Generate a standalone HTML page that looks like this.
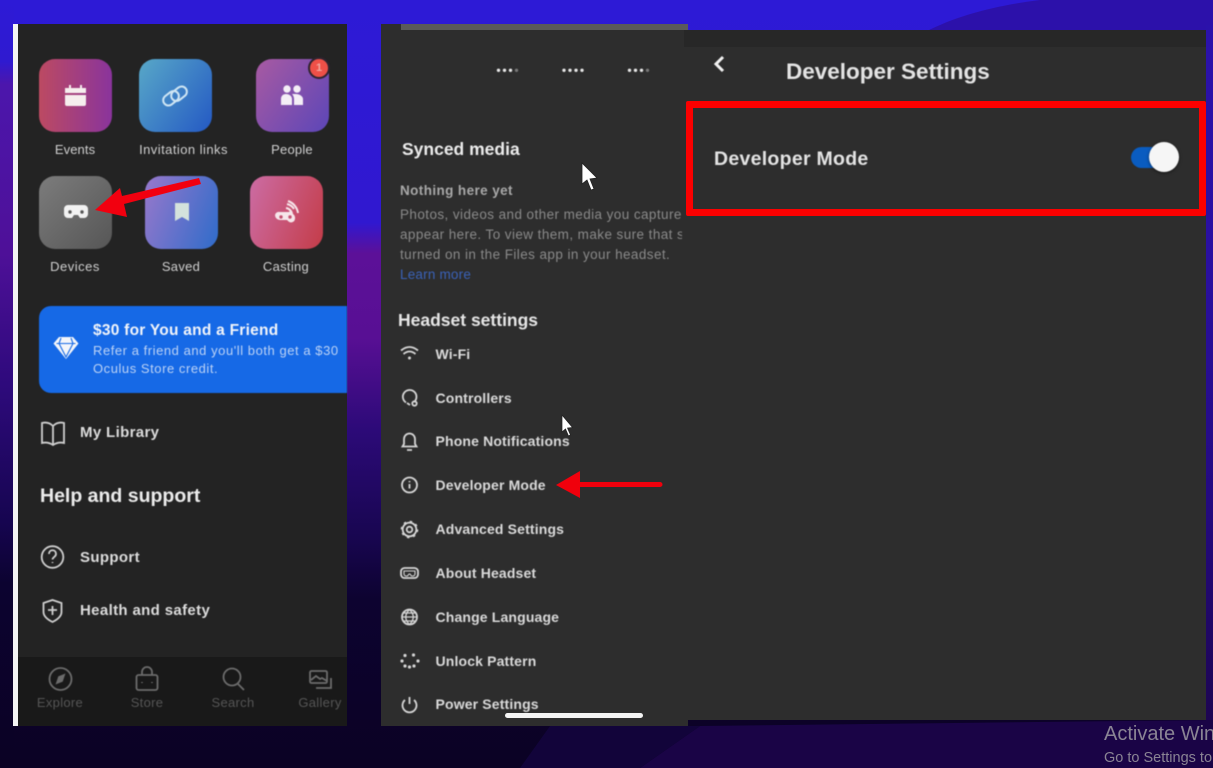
<!DOCTYPE html>
<html><head><meta charset="utf-8"><style>
html,body{margin:0;padding:0;background:#0c0226}
#r{position:relative;width:1213px;height:768px;overflow:hidden;font-family:"Liberation Sans",sans-serif;-webkit-font-smoothing:antialiased}
.a{position:absolute;white-space:nowrap}
svg.a{overflow:visible}
.p{position:absolute}
.t{position:absolute;white-space:nowrap;color:#d0d0d0;font-size:13px;transform:translateX(-50%);line-height:16px;letter-spacing:.3px}
.i{position:absolute;width:73px;height:73px;border-radius:16px}
.m{position:absolute;white-space:nowrap;font-weight:700;font-size:14px;color:#dadada;line-height:16px;left:435.500px;letter-spacing:.15px}
.l{position:absolute;white-space:nowrap;left:80px;color:#dcdcdc;font-weight:700;font-size:15px;line-height:18px;letter-spacing:.35px}
.n{color:#565656}
.b{filter:blur(.5px)}
</style></head><body><div id="r">
<svg class="a" style="left:0;top:0" width="1213" height="768" viewBox="0 0 1213 768">
<defs>
<linearGradient id="bg" x1="0" y1="0" x2="0" y2="768" gradientUnits="userSpaceOnUse"><stop offset="0" stop-color="#2d1ad6"/><stop offset=".29" stop-color="#3018d0"/><stop offset=".33" stop-color="#5c1098"/><stop offset=".44" stop-color="#580f94"/><stop offset=".56" stop-color="#2c0a78"/><stop offset=".7" stop-color="#180650"/><stop offset=".78" stop-color="#0d0330"/><stop offset="1" stop-color="#0b0224"/></linearGradient>
<linearGradient id="ls" x1="0" y1="0" x2="0" y2="768" gradientUnits="userSpaceOnUse"><stop offset="0" stop-color="#2d1ad6"/><stop offset=".08" stop-color="#2f1ad0"/><stop offset=".11" stop-color="#4c16ac"/><stop offset=".33" stop-color="#4e1098"/><stop offset=".5" stop-color="#2e0a7c"/><stop offset=".68" stop-color="#160550"/><stop offset=".76" stop-color="#0c0330"/><stop offset="1" stop-color="#0b0224"/></linearGradient>
<linearGradient id="rs" x1="0" y1="0" x2="0" y2="768" gradientUnits="userSpaceOnUse"><stop offset="0" stop-color="#2b12ac"/><stop offset=".35" stop-color="#2a10a0"/><stop offset=".65" stop-color="#240a80"/><stop offset="1" stop-color="#1c0448"/></linearGradient>
</defs>
<rect width="1213" height="768" fill="url(#bg)"/>
<rect x="0" y="0" width="14" height="768" fill="url(#ls)"/>
<path d="M925 32 C960 14 1000 5 1040 0 L1213 0 L1213 32Z" fill="#2c11aa"/>
<rect x="1206" y="25" width="7" height="745" fill="url(#rs)"/>
<path d="M640 768 L700 726 L1213 720 L1213 768Z" fill="#1a0446"/>
<path d="M550 726 L700 726 L640 768 L520 768Z" fill="#12043a"/>
</svg>

<!-- PHONE 1 -->
<div class="p" style="left:13px;top:24px;width:334px;height:702px;background:#232323"></div>
<div class="p" style="left:13px;top:24px;width:5px;height:702px;background:#f4f4f4"></div>
<div class="p" style="left:18px;top:657px;width:329px;height:69px;background:#191919"></div>
<div class="b">
<div class="i" style="left:39px;top:59px;background:linear-gradient(90deg,#bc4a62,#8a349c)"></div>
<div class="i" style="left:139px;top:59px;background:linear-gradient(125deg,#58a8c8,#2459c4)"></div>
<div class="i" style="left:256px;top:59px;background:linear-gradient(125deg,#a85aa2,#5c46b8)"></div>
<div class="i" style="left:39px;top:176px;background:linear-gradient(135deg,#7c7c7c,#565656)"></div>
<div class="i" style="left:145px;top:176px;background:linear-gradient(110deg,#9878cc,#2f6cca)"></div>
<div class="i" style="left:250px;top:176px;background:linear-gradient(110deg,#cc6ca4,#c43c48)"></div>
<div class="p" style="left:308px;top:57px;width:22px;height:22px;border-radius:50%;background:#ee5048;border:2px solid #2e2430;box-sizing:border-box"></div>
<div class="a" style="left:309px;top:61px;width:20px;text-align:center;color:#f2a8a0;font-size:11px;line-height:14px;font-weight:700">1</div>

<svg class="a" style="left:0;top:0" width="360" height="290" viewBox="0 0 360 290">
<path d="M65 88h21v5H65zM65 95h21v9a2 2 0 0 1-2 2H67a2 2 0 0 1-2-2z" fill="#f6eeee"/><rect x="69" y="85" width="2" height="4" fill="#f6eeee"/><rect x="80" y="85" width="2" height="4" fill="#f6eeee"/>
<g fill="none" stroke="#cfe6f4" stroke-width="2"><rect x="162.500" y="93" width="17" height="10.500" rx="5.200" transform="rotate(-38 171 98.200)"/><rect x="170.500" y="88.500" width="17" height="10.500" rx="5.200" transform="rotate(-38 179 93.700)"/></g>
<g fill="#f4eef6"><circle cx="287" cy="89" r="3.700"/><circle cx="297" cy="89" r="3.700"/><path d="M281 105v-6c0-3 2-5 5-5s6 2 6 5v6zM294 105v-6c0-2-1-4-2-5 1 0 3 0 4 0 3 0 7 2 7 5v6z"/></g>
<path d="M68 205h16a4 4 0 0 1 4 4v5a4 4 0 0 1-4 4h-4l-2-3h-4l-2 3h-4a4 4 0 0 1-4-4v-5a4 4 0 0 1 4-4z" fill="#f2f2f2"/><circle cx="70" cy="212" r="1.700" fill="#555"/><circle cx="82" cy="212" r="1.700" fill="#555"/>
<path d="M175 203h14v18l-7-4-7 4z" fill="#d4e2dc"/>
<g fill="none" stroke="#f6e6ea" stroke-width="2"><path d="M286 208a7 7 0 0 1 6 6"/><path d="M287 204a11 11 0 0 1 7 5"/><path d="M288 201a15 15 0 0 1 10 12"/></g><path d="M280 212h9a2 2 0 0 1 2-1l2 3a5 5 0 0 1 2 5 4 4 0 0 1-7 2l-1-1h-7a5 5 0 0 1-5-5 4 4 0 0 1 5-3z" fill="#f6e6ea"/><circle cx="281" cy="217" r="1.700" fill="#c45070"/><circle cx="290" cy="217" r="1.700" fill="#c45070"/>
</svg>

<div class="t" style="left:75px;top:142px;letter-spacing:.1px">Events</div>
<div class="t" style="left:183.500px;top:142px;letter-spacing:.45px">Invitation links</div>
<div class="t" style="left:292px;top:142px;letter-spacing:.2px">People</div>
<div class="t" style="left:75px;top:259px;letter-spacing:.5px">Devices</div>
<div class="t" style="left:181px;top:259px;letter-spacing:.3px">Saved</div>
<div class="t" style="left:286px;top:259px;letter-spacing:.3px">Casting</div>

<div class="p" style="left:39px;top:306px;width:308px;height:87px;background:#1669e6;border-radius:12px 0 0 12px"></div>
<svg class="a" style="left:52px;top:335px" width="28" height="28" viewBox="0 0 28 28"><path d="M7 2h14l5.500 6.500L14 24 1.500 8.500z" fill="#f4f6fa"/><path d="M4.500 8.500h19M9 3l-2 5.500L14 22l7-13.500L19 3" fill="none" stroke="#1669e6" stroke-width="1.100"/></svg>
<div class="a" style="left:93px;top:322px;color:#f2f5fa;font-weight:700;font-size:15.500px;line-height:18px;letter-spacing:.25px">$30 for You and a Friend</div>
<div class="a" style="left:93px;top:342px;color:#bcd3f6;font-size:13px;line-height:18px;letter-spacing:.55px">Refer a friend and you'll both get a $30<br>Oculus Store credit.</div>

<svg class="a" style="left:0;top:290px" width="360" height="440" viewBox="0 0 360 440" fill="none" stroke="#cfcfcf" stroke-width="1.800">
<path d="M53 136c-3-3-7-4-11-3v20c4-1 8 0 11 2 3-2 7-3 11-2V133c-4-1-8 0-11 3zM53 136v19"/>
<circle cx="52.500" cy="267" r="10.800"/><path d="M49 264c0-5 7-5 7 0 0 3-3.500 3-3.500 5.500M52.500 272v1"/>
<path d="M52.500 310l9 3v9c0 5-5 8-9 10-4-2-9-5-9-10v-9z"/><path d="M48 320h9M52.500 316v9"/>
<g stroke="#6c6c6c"><circle cx="60.500" cy="389" r="11"/><path d="M57 393l2-6 5-2-2 6z" fill="#6c6c6c"/>
<rect x="136.500" y="385" width="21" height="15" rx="2"/><path d="M142 385v-3a5 5 0 0 1 10 0v3M142 392v1M152 392v1"/>
<circle cx="232" cy="387" r="8.500"/><path d="M238 394l6 6"/>
<rect x="310" y="381" width="17" height="12" rx="1.500"/><path d="M331 388v10h-15M311 390l5-4 4 3 2-1 5 3"/></g>
</svg>
<div class="l" style="top:424px">My Library</div>
<div class="a" style="left:40px;top:484px;color:#ececec;font-weight:700;font-size:19.500px;line-height:24px">Help and support</div>
<div class="l" style="top:549px">Support</div>
<div class="l" style="top:602px">Health and safety</div>
<div class="t n" style="left:60px;top:695px">Explore</div>
<div class="t n" style="left:147px;top:695px">Store</div>
<div class="t n" style="left:233px;top:695px">Search</div>
<div class="t n" style="left:320px;top:695px">Gallery</div>
</div>

<svg class="a" style="left:0;top:0" width="240" height="240" viewBox="0 0 240 240"><path d="M95 210L120 188L122 196L199 178L201 184L124 204L127 217Z" fill="#f2000f"/></svg>

<!-- PHONE 2 -->
<div class="p" style="left:381px;top:24px;width:307px;height:702px;background:#2d2d2d"></div>
<div class="p" style="left:401px;top:24px;width:287px;height:6px;background:#5a5a5a"></div>
<div class="b">
<svg class="a" style="left:381px;top:60px" width="307" height="20" viewBox="0 0 307 20" fill="#e8e8e8">
<circle cx="117.500" cy="10.300" r="1.700"/><circle cx="123.500" cy="10.300" r="1.700"/><circle cx="129.500" cy="10.300" r="1.700"/><circle cx="135.500" cy="10.300" r="1.700" fill="#777"/>
<circle cx="183" cy="10.300" r="1.700"/><circle cx="189" cy="10.300" r="1.700"/><circle cx="195" cy="10.300" r="1.700"/><circle cx="201" cy="10.300" r="1.700"/>
<circle cx="248.500" cy="10.300" r="1.700"/><circle cx="254.500" cy="10.300" r="1.700"/><circle cx="260.500" cy="10.300" r="1.700"/><circle cx="266.500" cy="10.300" r="1.700" fill="#777"/>
</svg>
<div class="a" style="left:402px;top:139px;color:#ececec;font-weight:700;font-size:17.500px;line-height:21px">Synced media</div>
<div class="a" style="left:400px;top:183px;color:#a8a8a8;font-weight:700;font-size:13.500px;line-height:16px;letter-spacing:.4px">Nothing here yet</div>
<div class="a" style="left:400px;top:205px;width:282px;overflow:hidden;color:#8a8a8a;font-size:13.500px;line-height:20px;letter-spacing:.42px">Photos, videos and other media you capture<br>appear here. To view them, make sure that sync is<br>turned on in the Files app in your headset.<br><span style="color:#3a62b8;letter-spacing:.2px">Learn more</span></div>
<div class="a" style="left:398px;top:310px;color:#e6e6e6;font-weight:700;font-size:17.500px;line-height:21px">Headset settings</div>
<div class="m" style="top:346px">Wi-Fi</div>
<div class="m" style="top:390px">Controllers</div>
<div class="m" style="top:433px">Phone Notifications</div>
<div class="m" style="top:477px">Developer Mode</div>
<div class="m" style="top:521px">Advanced Settings</div>
<div class="m" style="top:565px">About Headset</div>
<div class="m" style="top:609px">Change Language</div>
<div class="m" style="top:653px">Unlock Pattern</div>
<div class="m" style="top:696px">Power Settings</div>
<svg class="a" style="left:381px;top:330px" width="60" height="390" viewBox="0 0 60 390" fill="none" stroke="#d6d6d6" stroke-width="1.800">
<path d="M20 20.500Q28.500 13.500 37 20.500M22.500 24Q28.500 19 34.500 24"/><circle cx="28.500" cy="28" r="1.500" fill="#d6d6d6" stroke="none"/>
<path d="M33 72a6.800 6.800 0 1 0-8 0.500"/><circle cx="33.500" cy="73.500" r="2.200"/><path d="M26 73l3 2"/>
<path d="M21.500 116.500h14l-1.500-2.500v-5a5.500 5.500 0 0 0-11 0v5zM26 120h5"/>
<circle cx="28.500" cy="155" r="7.500"/><path d="M28.500 154v4.500M28.500 151v1.200"/>
<circle cx="28.500" cy="199.500" r="6.800"/><circle cx="28.500" cy="199.500" r="8" stroke-dasharray="2.500 3.780" stroke-width="1.600"/><circle cx="28.500" cy="199.500" r="2.800"/>
<rect x="20" y="238" width="17" height="10" rx="3.500"/><path d="M23 241h11v3c0 1-1 2-2 2h-1.500l-1.500-2h-1l-1.500 2H25c-1 0-2-1-2-2z" stroke-width="1.100"/>
<circle cx="28.500" cy="287" r="7.500"/><path d="M21 287h15M28.500 279.500c-5 5-5 10 0 15M28.500 279.500c5 5 5 10 0 15M22 283h13M22 291h13" stroke-width="1.300"/>
<g fill="#d6d6d6" stroke="none"><circle cx="21" cy="331" r="1.600"/><circle cx="37" cy="331" r="1.600"/><circle cx="24" cy="325.500" r="1.600"/><circle cx="32.500" cy="325" r="1.600"/><circle cx="24" cy="336" r="1.600"/><circle cx="28.500" cy="337" r="1.600"/><circle cx="33" cy="336" r="1.600"/></g>
<path d="M24 370a7 7 0 1 0 9 0M28.500 367v7"/>
</svg>
</div>
<div class="p" style="left:505px;top:713px;width:138px;height:5px;border-radius:3px;background:#f4f4f4"></div>
<svg class="a" style="left:0;top:0" width="700" height="500" viewBox="0 0 700 500">
<path d="M556 485l24-14v11h80a2.500 2.500 0 0 1 0 5h-80v11z" fill="#f0000c"/>
<path d="M582 163v21l5-4 4 10 3-1-4-10 7-1z" fill="#fff" stroke="#222" stroke-width=".8"/>
<path d="M562 415v17l3.500-3 3 7 2-1-3-7 5-.5z" fill="#fff" stroke="#222" stroke-width=".7"/>
</svg>

<!-- PANEL 3 -->
<div class="p" style="left:684px;top:30px;width:522px;height:690px;background:#2d2d2d"></div>
<div class="p" style="left:684px;top:30px;width:522px;height:17px;background:#272727"></div>
<div class="b">
<svg class="a" style="left:700px;top:50px" width="40" height="30" viewBox="0 0 40 30"><path d="M23 7l-7 7 7 7" fill="none" stroke="#f2f2f2" stroke-width="3"/></svg>
<div class="a" style="left:786px;top:58px;color:#e4e4e4;font-weight:700;font-size:22.500px;line-height:28px">Developer Settings</div>
<div class="a" style="left:714px;top:146px;color:#e4e4e4;font-weight:700;font-size:19.500px;line-height:26px;letter-spacing:.28px">Developer Mode</div>
<div class="p" style="left:1131px;top:147px;width:36px;height:21px;border-radius:11px;background:#0a5cc0"></div>
<div class="p" style="left:1149px;top:142px;width:30px;height:30px;border-radius:50%;background:#f6f6f6;box-shadow:0 1px 3px rgba(0,0,0,.5)"></div>
</div>
<div class="p" style="left:686px;top:101px;width:520px;height:115px;box-sizing:border-box;border:7px solid #fb0000;border-radius:2px"></div>

<div class="a" style="left:1104px;top:722px;color:#8a8494;font-size:20px;line-height:24px">Activate Windows</div>
<div class="a" style="left:1104px;top:749px;color:#8a8494;font-size:14.500px;line-height:18px">Go to Settings to activate Windows.</div>
</div></body></html>
